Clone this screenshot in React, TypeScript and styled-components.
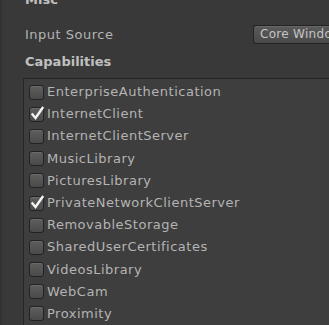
import styled, { createGlobalStyle } from "styled-components";

const GlobalStyle = createGlobalStyle`
  html, body {
    margin: 0;
    padding: 0;
    background: #393939;
    overflow: hidden;
  }
  body {
    font-family: "DejaVu Sans", "Liberation Sans", sans-serif;
    font-size: 13px;
    color: #b4b4b4;
  }
`;

const Inspector = styled.div`
  width: 329px;
  height: 325px;
  border-left: 2px solid #333333;
  box-sizing: border-box;
  overflow: hidden;
  display: flex;
  flex-direction: column;
`;

const SectionTitle = styled.div<{ $top?: number }>`
  margin-top: ${p => p.$top ?? 0}px;
  padding-left: 23px;
  height: 22px;
  line-height: 22px;
  font-weight: bold;
  color: #c0c0c0;
`;

const FieldRow = styled.div`
  display: grid;
  grid-template-columns: 228px 1fr;
  align-items: center;
  height: 22px;
  margin-top: 13px;
  padding-left: 23px;
  white-space: nowrap;
`;

const FieldLabel = styled.span`
  line-height: 22px;
  letter-spacing: 0.5px;
`;

const PopupButton = styled.div`
  height: 17px;
  margin-top: -2px;
  line-height: 17px;
  padding-left: 6px;
  font-size: 12px;
  letter-spacing: 0.3px;
  color: #c4c4c4;
  border: 1px solid #232323;
  border-right: none;
  border-radius: 3px 0 0 3px;
  background: linear-gradient(#5a5a5a, #4a4a4a);
  box-shadow: inset 0 1px 0 #666666;
  white-space: nowrap;
  overflow: hidden;
`;

const CapabilityList = styled.div`
  margin-top: 5px;
  margin-left: 21px;
  border-top: 1px solid #262626;
  border-left: 1px solid #262626;
  background: #3e3e3e;
  padding: 2px 0 0 5px;
  flex: 1;
`;

const CapabilityRow = styled.div`
  display: flex;
  align-items: center;
  height: 22.2px;
  gap: 3px;
  white-space: nowrap;
`;

const Box = styled.span`
  position: relative;
  width: 13px;
  height: 13px;
  border: 1px solid #222222;
  border-radius: 3px;
  background: linear-gradient(#5e5e5e, #4a4a4a);
  box-shadow: inset 0 1px 0 #6a6a6a;
  flex-shrink: 0;
`;

const Tick = styled.svg`
  position: absolute;
  left: 0px;
  top: -3px;
`;

const CapabilityName = styled.span`
  line-height: 22px;
  letter-spacing: 0.5px;
  color: #b4b4b4;
`;

const capabilities = [
  { name: "EnterpriseAuthentication", on: false },
  { name: "InternetClient", on: true },
  { name: "InternetClientServer", on: false },
  { name: "MusicLibrary", on: false },
  { name: "PicturesLibrary", on: false },
  { name: "PrivateNetworkClientServer", on: true },
  { name: "RemovableStorage", on: false },
  { name: "SharedUserCertificates", on: false },
  { name: "VideosLibrary", on: false },
  { name: "WebCam", on: false },
  { name: "Proximity", on: false },
];

const Checkbox = ({ checked }: { checked: boolean }) => (
  <Box>
    {checked && (
      <Tick width="15" height="16" viewBox="0 0 15 16">
        <path d="M2.5 9.5 L5.5 13 L12.5 3" fill="none" stroke="#f4f4f4" strokeWidth="2.4" strokeLinecap="square" />
      </Tick>
    )}
  </Box>
);

export default function App() {
  return (
    <>
      <GlobalStyle />
      <Inspector>
        <SectionTitle $top={-11}>Misc</SectionTitle>
        <FieldRow>
          <FieldLabel>Input Source</FieldLabel>
          <PopupButton>Core Window</PopupButton>
        </FieldRow>
        <SectionTitle $top={5}>Capabilities</SectionTitle>
        <CapabilityList>
          {capabilities.map(c => (
            <CapabilityRow key={c.name}>
              <Checkbox checked={c.on} />
              <CapabilityName>{c.name}</CapabilityName>
            </CapabilityRow>
          ))}
        </CapabilityList>
      </Inspector>
    </>
  );
}
